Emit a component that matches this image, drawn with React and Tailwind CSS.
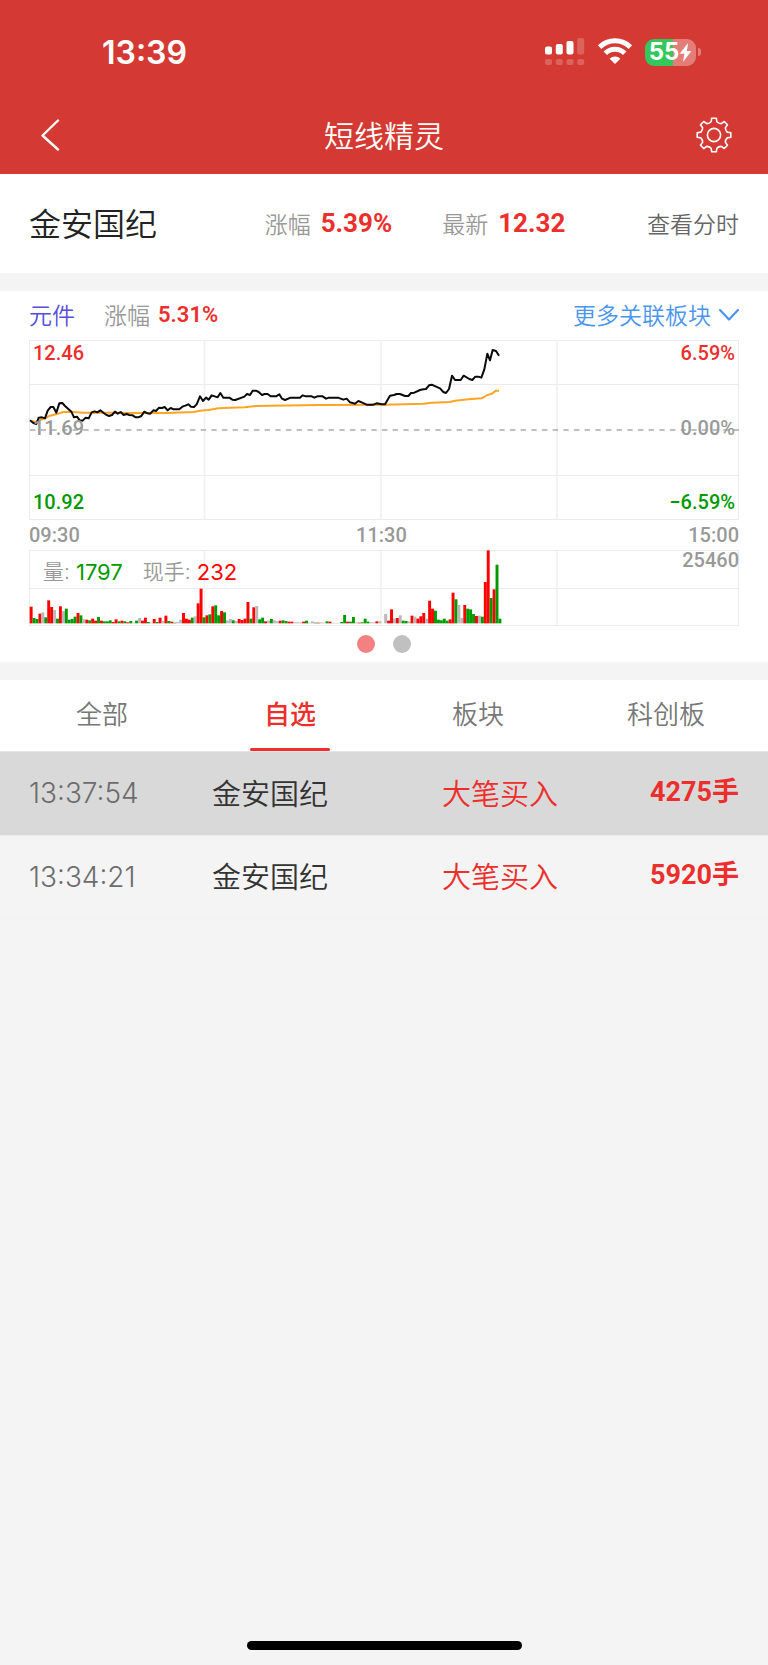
import React from "react";

const PRICE =
  "90,271 100,279 109,282 116,263 126,262 135,265 143,242 152,231 160,231 169,248 178,220 187,219 195,228 205,237 214,245 222,262 231,260 239,271 248,272 257,263 266,265 275,247 284,244 292,247 301,241 310,248 318,254 327,258 336,255 345,245 353,251 362,246 371,255 380,252 388,255 398,256 407,262 415,262 424,258 433,245 442,250 451,251 460,241 468,243 477,233 486,234 494,231 503,241 512,234 521,238 538,238 547,230 556,227 565,223 573,230 582,231 590,223 600,199 609,213 618,203 626,209 635,196 653,202 661,189 670,203 688,203 697,209 706,210 733,200 741,192 750,195 758,182 768,182 776,186 786,195 794,192 803,192 812,199 828,199 838,193 846,206 855,210 872,203 900,203 908,196 917,199 935,199 943,203 952,199 968,199 978,206 987,203 1014,203 1030,209 1040,206 1050,217 1065,221 1075,213 1085,217 1100,224 1120,224 1130,220 1145,223 1155,223 1170,197 1182,195 1190,192 1200,192 1215,198 1225,198 1233,189 1243,188 1260,180 1270,178 1278,177 1287,166 1295,164 1320,175 1330,186 1338,189 1347,177 1356,137 1365,150 1382,150 1391,137 1408,147 1417,150 1426,140 1435,140 1444,143 1453,118 1462,71 1470,91 1478,60 1488,63 1497,77";

const AVERAGE =
  "90,271 105,276 120,270 135,265 150,257 175,251 190,246 210,245 250,248 330,248 420,249 500,249 580,246 600,242 625,240 655,235 690,233 735,232 770,228 810,227 960,225 1155,224 1270,221 1295,218 1350,216 1365,212 1405,208 1445,205 1462,195 1476,191 1488,182 1497,182";

// One entry per minute: r = up, g = down, n = flat, followed by the bar height.
const VOLUME =
  "r50 g16 g13 r29 n33 g18 r69 r49 n40 g14 r51 n37 g44 g11 g13 g20 r31 g24 n12 r11 g9 r14 r8 g19 r8 g6 g6 g9 r4 r12 g6 r8 g6 r3 g7 n2 g8 n16 r8 r17 g4 n2 r13 g4 r17 n7 r23 g7 r5 g2 n4 n11 r31 r14 r11 g17 n21 r60 r104 g18 r24 g27 r51 g54 g24 r37 g33 n9 n13 g9 n7 r13 r10 r14 r64 g14 r48 n52 g12 g17 r6 n8 g13 n9 n6 r8 g9 g7 r5 r5 n3 n3 n3 r5 g8 n2 n6 g2 r2 n3 n2 g6 r5 n2 n1 n1 g4 g25 r5 g5 g19 n3 r2 g3 g14 g5 n3 n3 r6 n6 n0 n28 r8 r42 n15 r16 n24 g8 g7 n6 r23 n20 r14 r21 r31 n14 r68 r44 g38 g11 g9 g14 g8 r12 r92 g72 n55 n16 r55 g44 g42 g28 r22 n23 g20 r124 r219 g76 r102 g176 g14";

const BAR_COLORS = { r: "#ff0000", g: "#009a00", n: "#b9b9b9" };
const BARS = VOLUME.split(" ").map((d) => ({ color: BAR_COLORS[d[0]], h: Number(d.slice(1)) }));

const CJK = "font-['Noto_Sans_CJK_SC',sans-serif]";
const NUM = "font-['Roboto','Noto_Sans_CJK_SC',sans-serif]";
const INTER = "font-['Inter','Noto_Sans_CJK_SC',sans-serif]";

function gearPath() {
  const rot = (x, y, a) =>
    `${(18 + x * Math.cos(a) - y * Math.sin(a)).toFixed(2)} ${(18 + x * Math.sin(a) + y * Math.cos(a)).toFixed(2)}`;
  let d = "";
  for (let i = 0; i < 8; i++) {
    const a = (i * Math.PI) / 4;
    d += `${i ? "L" : "M"}${rot(-2.9, -13.2, a)}L${rot(-2.3, -16.8, a)}L${rot(2.3, -16.8, a)}L${rot(2.9, -13.2, a)}`;
    d += `Q${rot(4.7, -11.3, a)} ${rot(-2.9, -13.2, a + Math.PI / 4)}`;
  }
  return d + "Z";
}

function Gear() {
  return (
    <svg className="size-9" viewBox="0 0 36 36" fill="none" stroke="#fff" strokeWidth="1.6" strokeLinejoin="round" aria-hidden="true">
      <path d={gearPath()} />
      <circle cx="18" cy="18" r="6.6" />
    </svg>
  );
}

function Signal() {
  return (
    <svg className="h-7 w-10" viewBox="0 0 40 28" fill="#fff" aria-hidden="true">
      <rect x="0" y="8.5" width="7" height="8" rx="2" />
      <rect x="10.8" y="6" width="7" height="10.5" rx="2" />
      <rect x="21.5" y="3" width="7" height="13.5" rx="2" />
      <g opacity=".2">
        <rect x="32.2" y="0" width="7" height="16.5" rx="2" />
        <rect x="0" y="21" width="7" height="6" rx="2" />
        <rect x="10.8" y="21" width="7" height="6" rx="2" />
        <rect x="21.5" y="21" width="7" height="6" rx="2" />
        <rect x="32.2" y="21" width="7" height="6" rx="2" />
      </g>
    </svg>
  );
}

function Wifi() {
  return (
    <svg className="h-7 w-9" viewBox="0 0 36 28" fill="none" stroke="#fff" strokeWidth="5" aria-hidden="true">
      <path d="M2.6 9.1A22 22 0 0 1 33.4 9.1" />
      <path d="M8.3 15.2A13.8 13.8 0 0 1 27.7 15.2" />
      <path d="M18 26l-5.4-5.3a7.6 7.6 0 0 1 10.8 0z" fill="#fff" stroke="none" />
    </svg>
  );
}

function Battery() {
  return (
    <div className="flex items-center gap-0.5">
      <div className="flex h-[27px] w-[51px] items-center justify-center rounded-[9px] bg-linear-to-r from-[#34c759] from-55% to-[#e27d78] to-55%">
        <span className={`${INTER} text-[24px] leading-none font-bold text-white`}>55</span>
        <svg className="h-[19px] w-[13px]" viewBox="0 0 12 18" fill="#fff" aria-hidden="true">
          <path d="M8.5 0L.4 10.2H5L3.6 18l8-10.4H7.2z" />
        </svg>
      </div>
      <div className="h-2 w-[3px] rounded-r-full bg-[#e27d78]" />
    </div>
  );
}

function PriceChart() {
  return (
    <div className="grid">
      <svg className="col-start-1 row-start-1 block h-[180px] w-full" viewBox="87 30 2130 540" preserveAspectRatio="none" fill="none" role="img" aria-label="元件 分时走势">
        <g stroke="#ebebeb" strokeWidth="3">
          <path d="M88.5 31.5H2215.5V568.5H88.5Z" />
          <path d="M87 163.5H2217M87 436.5H2217" />
        </g>
        <path d="M613.5 30V570M1143 30V570M1671 30V570" stroke="#f0f0f0" strokeWidth="4.5" />
        <path d="M90 300H2217" stroke="#aaaaaa" strokeWidth="5" strokeDasharray="16 16" />
        <polyline points={AVERAGE} stroke="#ffa526" strokeWidth="6" strokeLinejoin="round" />
        <polyline points={PRICE} stroke="#0a0a0a" strokeWidth="6" strokeLinejoin="round" />
      </svg>
      <div className={`${NUM} col-start-1 row-start-1 flex justify-between px-1 pt-px pb-1.5 text-[20px] leading-6 font-medium`}>
        <div className="flex flex-col justify-between">
          <span className="text-[#ec2f2c]">12.46</span>
          <span className="text-[#999]">11.69</span>
          <span className="text-[#009a00]">10.92</span>
        </div>
        <div className="flex flex-col justify-between text-right">
          <span className="text-[#ec2f2c]">6.59%</span>
          <span className="text-[#999]">0.00%</span>
          <span className="text-[#009a00]">−6.59%</span>
        </div>
      </div>
    </div>
  );
}

function VolumeChart() {
  return (
    <div className="grid">
      <svg className="col-start-1 row-start-1 block h-[76px] w-full" viewBox="87 58 2130 228" preserveAspectRatio="none" fill="none" role="img" aria-label="成交量">
        <path d="M88.5 59.5H2215.5V284.5H88.5ZM87 173.5H2217" stroke="#ebebeb" strokeWidth="3" />
        <path d="M613.5 58V286M1143 58V286M1671 58V286" stroke="#f0f0f0" strokeWidth="4.5" />
        {BARS.map((b, i) => (
          <rect key={i} x={89 + i * 8.79} y={278 - b.h} width="8.8" height={b.h} fill={b.color} />
        ))}
      </svg>
      <div className="col-start-1 row-start-1 flex items-start justify-between">
        <dl className={`${INTER} flex gap-5 pt-2.5 pl-[14px] text-[22px] leading-6 text-[#999]`}>
          <div className="flex gap-1.5">
            <dt className="text-[21px] font-[350]">量:</dt>
            <dd className="text-[#009a00]">1797</dd>
          </div>
          <div className="flex gap-1.5">
            <dt className="text-[21px] font-[350]">现手:</dt>
            <dd className="text-[#ff0000]">232</dd>
          </div>
        </dl>
        <span className={`${NUM} text-[20px] leading-5 font-medium text-[#999]`}>25460</span>
      </div>
    </div>
  );
}

const TABS = ["全部", "自选", "板块", "科创板"];
const ALERTS = [
  { time: "13:37:54", name: "金安国纪", kind: "大笔买入", lots: "4275手" },
  { time: "13:34:21", name: "金安国纪", kind: "大笔买入", lots: "5920手" },
];

export default function App() {
  return (
    <div className={`${CJK} flex min-h-screen flex-col bg-[#f4f4f4]`}>
      <header className="bg-[#d43a33] text-white">
        <div className="flex h-24 items-center justify-between pt-2 pr-[67px] pl-[102px]">
          <span className={`${INTER} pt-0.5 text-[32px] leading-none font-semibold`}>13:39</span>
          <div className="flex items-center gap-3">
            <Signal />
            <Wifi />
            <Battery />
          </div>
        </div>
        <div className="grid h-[78px] grid-cols-3 items-center px-9">
          <button type="button" aria-label="返回" className="justify-self-start">
            <svg className="h-8 w-7" viewBox="0 0 28 32" fill="none" stroke="#fff" strokeWidth="2.4" strokeLinecap="round" strokeLinejoin="round" aria-hidden="true">
              <path d="M22 1.5L6.5 16.5 22 30.5" />
            </svg>
          </button>
          <h1 className="pb-0.5 text-center text-[30px] leading-none font-[350]">短线精灵</h1>
          <button type="button" aria-label="设置" className="justify-self-end">
            <Gear />
          </button>
        </div>
      </header>

      <section className="flex h-[99px] items-center justify-between bg-white px-[29px]">
        <h2 className="pb-1 text-[32px] leading-none font-[350] text-[#222]">金安国纪</h2>
        <dl className="ml-[26px] flex items-center gap-[50px] text-[23px] leading-none text-[#999]">
          <div className="flex items-center gap-2.5">
            <dt className="font-[350]">涨幅</dt>
            <dd className={`${NUM} pb-0.5 text-[26px] leading-none font-bold text-[#ec2f2c]`}>5.39%</dd>
          </div>
          <div className="flex items-center gap-2.5">
            <dt className="font-[350]">最新</dt>
            <dd className={`${NUM} pb-0.5 text-[26px] leading-none font-bold text-[#ec2f2c]`}>12.32</dd>
          </div>
        </dl>
        <a href="#chart" className="text-[23px] leading-none font-[350] text-[#666]">查看分时</a>
      </section>

      <section id="chart" className="mt-[18px] bg-white px-[29px]">
        <div className="flex h-[49px] items-center justify-between pb-0.5 text-[23px] leading-none">
          <div className="flex items-center">
            <a href="#sector" className="font-[350] text-[#5350dc]">元件</a>
            <span className="ml-[29px] font-[350] text-[#999]">涨幅</span>
            <span className={`${NUM} ml-2 text-[22px] leading-none font-semibold text-[#ec2f2c]`}>5.31%</span>
          </div>
          <button type="button" className="flex items-center gap-2 font-[350] text-[#4a95ee]">
            更多关联板块
            <svg className="h-3 w-5" viewBox="0 0 20 12" fill="none" stroke="currentColor" strokeWidth="2.2" strokeLinecap="round" strokeLinejoin="round" aria-hidden="true">
              <path d="M1 1l9 9.5L19 1" />
            </svg>
          </button>
        </div>
        <PriceChart />
        <div className={`${NUM} grid h-[30px] grid-cols-3 items-center text-[20px] leading-none font-medium text-[#999]`}>
          <span>09:30</span>
          <span className="pr-[5px] text-center">11:30</span>
          <span className="text-right">15:00</span>
        </div>
        <VolumeChart />
        <div className="flex h-9 items-center justify-center gap-[18px]">
          <button type="button" aria-label="第1页" className="size-[18px] rounded-full bg-[#f48182]" />
          <button type="button" aria-label="第2页" className="size-[18px] rounded-full bg-[#c0c0c0]" />
        </div>
      </section>

      <nav className="mt-[18px] grid h-[72px] grid-cols-4 border-b border-[#e4e4e4] bg-white px-2">
        {TABS.map((t) => (
          <button
            key={t}
            type="button"
            className={
              t === "自选"
                ? "flex flex-col items-center justify-between text-[26px] font-medium text-[#ec2f2c]"
                : "flex flex-col items-center justify-between text-[26px] font-[350] text-[#777]"
            }
          >
            <span className="pt-[15px] leading-9">{t}</span>
            {t === "自选" && <span className="h-[3px] w-20 rounded-full bg-[#ec2f2c]" />}
          </button>
        ))}
      </nav>

      <table className="w-full table-fixed border-collapse text-left leading-none">
        <tbody>
          {ALERTS.map((a, i) => (
            <tr key={a.time} className={i === 0 ? "h-[83px] border-b border-[#e9e9e9] bg-[#d9d9d9]" : "h-[83px] border-b border-[#f2f2f2]"}>
              <td className={`${INTER} w-[212px] pl-[29px] text-[28px] font-light text-[#6c6c6c]`}>{a.time}</td>
              <td className="w-[230px] pb-0.5 text-[29px] font-[350] text-[#333]">{a.name}</td>
              <td className="pb-0.5 text-[29px] font-[350] text-[#ec2f2c]">{a.kind}</td>
              <td className={`${NUM} pr-[29px] pb-0.5 text-right text-[27px] font-bold text-[#ec2f2c]`}>{a.lots}</td>
            </tr>
          ))}
        </tbody>
      </table>

      <footer className="mt-auto flex justify-center pb-[15px]">
        <div className="h-[9px] w-[275px] rounded-full bg-black" />
      </footer>
    </div>
  );
}
